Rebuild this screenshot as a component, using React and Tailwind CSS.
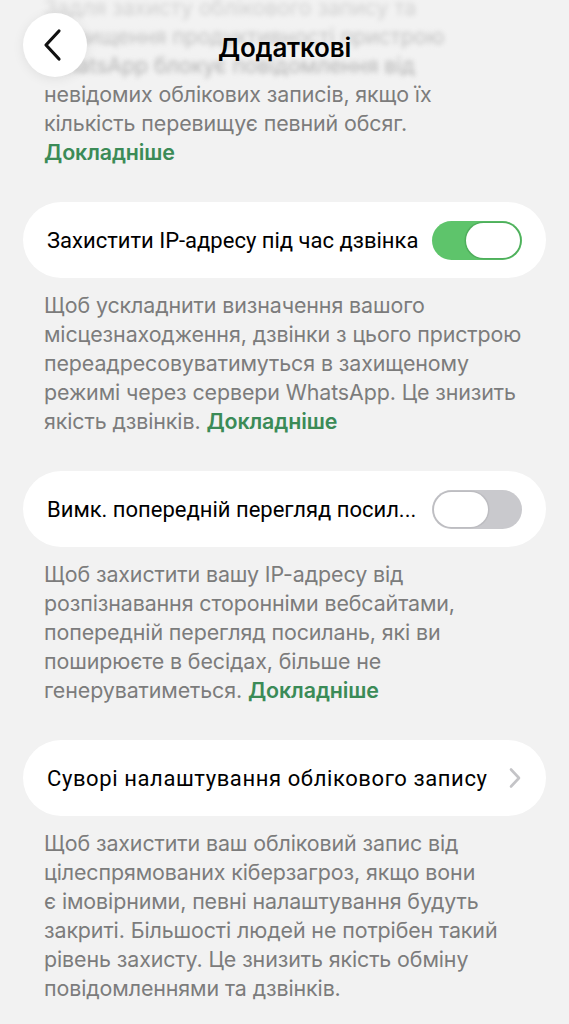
import React from 'react';

const Toggle = ({ on }) => (
  <div
    className={`w-[90px] h-[39px] rounded-full p-[2px] flex shrink-0 ${
      on ? 'bg-[#5ec46b] justify-end' : 'bg-[#c9c9cd] justify-start'
    }`}
  >
    <div
      className={`w-[54px] h-[35px] rounded-full bg-white ${
        on ? 'shadow-[0_0_0_1.5px_#4fae5c]' : 'shadow-[0_0_0_1.5px_#bdbdc1]'
      }`}
    />
  </div>
);

const Link = () => <span className="font-semibold text-[#3b8b57]">Докладніше</span>;

// сірий опис під рядком, рядки розбиті як на скріні
const Desc = ({ lines, link, blurTop = 0 }) => (
  <p
    className="px-[44px] text-[21.4px] leading-[29px] text-[#7c7c7c] tracking-[-0.1px]"
    style={{ fontFamily: 'Inter, "Noto Sans", sans-serif' }}
  >
    {lines.map((line, i) => (
      <span
        key={i}
        className={`block whitespace-nowrap ${i < blurTop ? 'blur-[2.5px] text-[#a9a9a9]' : ''}`}
      >
        {line}
        {link && i === lines.length - 1 && (
          <>
            {line ? ' ' : ''}
            <Link />
          </>
        )}
      </span>
    ))}
  </p>
);

const Row = ({ title, tracking = '', children }) => (
  <div className="mx-[23px] h-[76px] rounded-full bg-white pl-[24px] pr-[24px] flex items-center justify-between gap-2">
    <span
      className={`min-w-0 text-[22px] whitespace-nowrap text-black ${tracking}`}
      style={{ fontFamily: 'Roboto, "Noto Sans", sans-serif' }}
    >
      {title}
    </span>
    {children}
  </div>
);

export default function App() {
  return (
    <div
      className="relative w-full h-[1024px] overflow-hidden bg-[#f2f2f2] text-black"
      style={{ fontFamily: 'Inter, "Noto Sans", sans-serif' }}
    >
      <div className="-mt-[7px] flex flex-col">
        <Desc
          blurTop={3}
          link
          lines={[
            'Задля захисту облікового запису та',
            'підвищення продуктивності пристрою',
            'WhatsApp блокує повідомлення від',
            'невідомих облікових записів, якщо їх',
            'кількість перевищує певний обсяг.',
            '',
          ]}
        />

        <div className="mt-[35px] flex flex-col gap-[13px]">
          <Row title="Захистити IP-адресу під час дзвінка">
            <Toggle on />
          </Row>
          <Desc
            link
            lines={[
              'Щоб ускладнити визначення вашого',
              'місцезнаходження, дзвінки з цього пристрою',
              'переадресовуватимуться в захищеному',
              'режимі через сервери WhatsApp. Це знизить',
              'якість дзвінків.',
            ]}
          />
        </div>

        <div className="mt-[35px] flex flex-col gap-[13px]">
          <Row title="Вимк. попередній перегляд посил...">
            <Toggle on={false} />
          </Row>
          <Desc
            link
            lines={[
              'Щоб захистити вашу IP-адресу від',
              'розпізнавання сторонніми вебсайтами,',
              'попередній перегляд посилань, які ви',
              'поширюєте в бесідах, більше не',
              'генеруватиметься.',
            ]}
          />
        </div>

        <div className="mt-[35px] flex flex-col gap-[13px]">
          <Row title="Суворі налаштування облікового запису" tracking="tracking-[0.6px]">
            <svg width="14" height="22" viewBox="0 0 14 22" fill="none" className="shrink-0">
              <path d="M3 2.5 L11 11 L3 19.5" stroke="#c4c4c7" strokeWidth="2.6" strokeLinecap="round" strokeLinejoin="round" />
            </svg>
          </Row>
          <Desc
            lines={[
              'Щоб захистити ваш обліковий запис від',
              'цілеспрямованих кіберзагроз, якщо вони',
              'є імовірними, певні налаштування будуть',
              'закриті. Більшості людей не потрібен такий',
              'рівень захисту. Це знизить якість обміну',
              'повідомленнями та дзвінків.',
            ]}
          />
        </div>
      </div>

      {/* шапка поверх розмитого верху */}
      <div className="absolute top-0 left-0 right-0 h-[90px] bg-gradient-to-b from-[#f2f2f2]/60 to-transparent" />
      <button className="absolute left-[23px] top-[13px] w-[64px] h-[64px] rounded-full bg-white shadow-[0_2px_12px_rgba(0,0,0,0.08)] flex items-center justify-center">
        <svg width="22" height="34" viewBox="0 0 22 34" fill="none" className="-ml-[6px]">
          <path d="M18 3 L5 17 L18 31" stroke="#111" strokeWidth="3.2" strokeLinecap="round" strokeLinejoin="round" />
        </svg>
      </button>
      <div className="absolute top-[28px] left-0 right-0 text-center text-[26px] font-semibold tracking-[-0.2px]">
        Додаткові
      </div>
    </div>
  );
}
